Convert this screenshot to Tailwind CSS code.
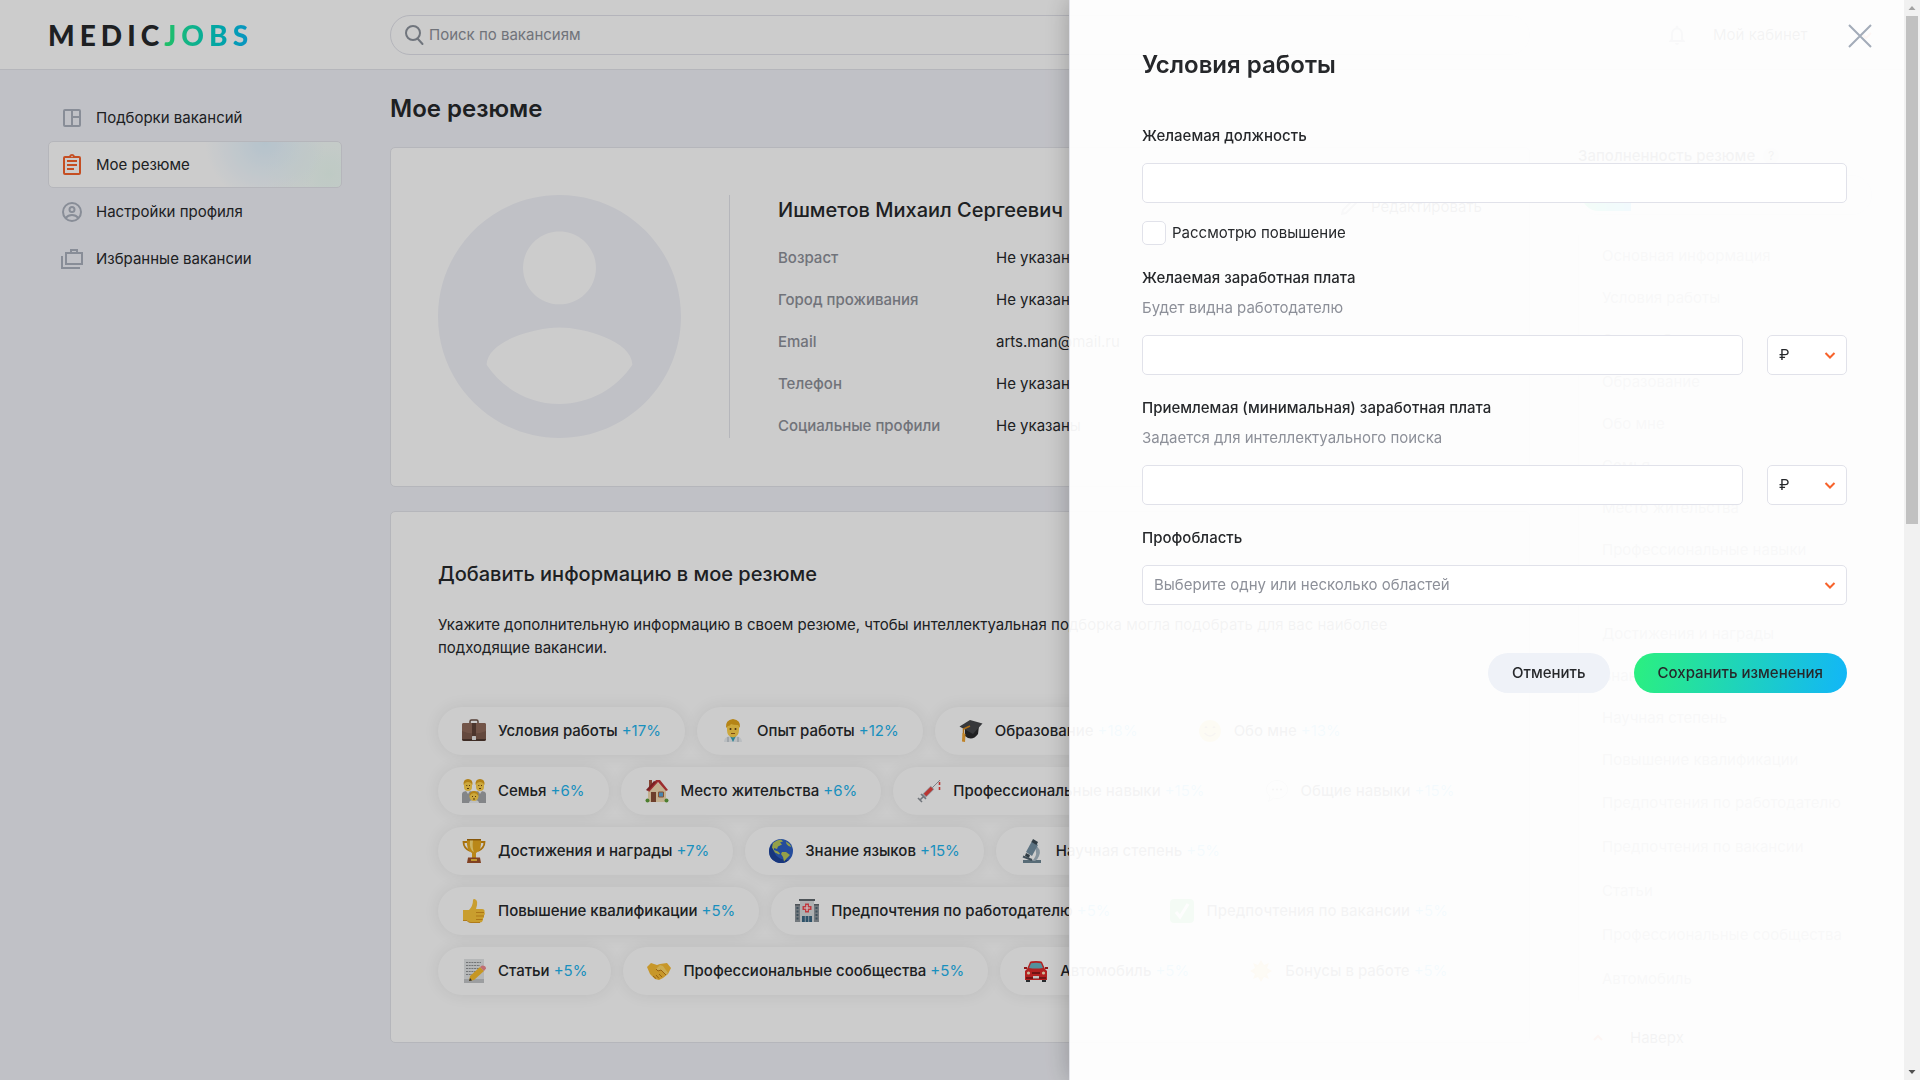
<!DOCTYPE html>
<html lang="ru">
<head>
<meta charset="utf-8">
<meta name="viewport" content="width=device-width, initial-scale=1">
<title>Мое резюме — MedicJobs</title>
<script src="https://cdn.jsdelivr.net/npm/@tailwindcss/browser@4"></script>
</head>
<body class="h-screen overflow-hidden bg-[#f1f2f8] font-['Inter',sans-serif] text-[15px] leading-6 text-[#26282b]">

<header class="grid h-[70px] grid-cols-[294px_1fr_294px] items-center gap-12 border-b border-[#e3e4ea] bg-white px-12">
  <a href="#" class="flex font-['Lato',sans-serif] text-[28px] leading-8 font-black tracking-[0.18em]" aria-label="MedicJobs"><span>MEDIC</span><span class="bg-gradient-to-r from-[#2bf07f] to-[#12b6f8] bg-clip-text text-transparent">JOBS</span></a>
  <label class="flex h-10 items-center gap-0.5 rounded-full border border-[#e1e2ea] px-3">
    <svg class="size-6 shrink-0 text-[#8d939d]" viewBox="0 0 24 24" fill="none" stroke="currentColor" stroke-width="2" stroke-linecap="round"><circle cx="10" cy="10" r="7"/><path d="M14.500 15.500 19.500 21"/></svg>
    <input type="search" placeholder="Поиск по вакансиям" class="w-full bg-transparent outline-none placeholder:text-[#8d9099]">
  </label>
  <div class="flex items-center gap-6 pl-[87px]">
    <svg class="size-6 text-[#8d939d]" viewBox="0 0 24 24" fill="currentColor"><path d="M12 22c1.100 0 2-.9 2-2h-4c0 1.100.9 2 2 2zm6-6v-5c0-3.070-1.630-5.640-4.500-6.320V4a1.500 1.500 0 0 0-3 0v.68C7.640 5.360 6 7.920 6 11v5l-2 2v1h16v-1l-2-2zm-2 1H8v-6c0-2.480 1.510-4.500 4-4.500s4 2.020 4 4.500v6z"/></svg>
    <a href="#" class="grow whitespace-nowrap">Мой кабинет</a>
    <svg class="size-3 text-[#f7622b]" viewBox="0 0 12 12" fill="none" stroke="currentColor" stroke-width="2"><path d="m1 4 5 5 5-5"/></svg>
  </div>
</header>

<div class="grid grid-cols-[294px_1fr_294px] items-start gap-12 px-12">
  <nav class="mt-6 flex flex-col">
    <a href="#" class="flex h-[47px] items-center gap-3 px-3">
      <svg class="size-6 text-[#aab1bd]" viewBox="0 0 24 24" fill="none" stroke="currentColor" stroke-width="2"><rect x="4" y="4" width="16" height="16" rx="1"/><path d="M12 4v16M12 11h8"/></svg>
      Подборки вакансий</a>
    <a href="#" class="flex h-[47px] items-center gap-3 rounded-[5px] border border-[#e3e4ea] bg-white bg-[radial-gradient(circle_at_74%_0%,#e2f4ff_0,#e2f4ff00_60px),radial-gradient(circle_at_96%_70%,#eefdf6_0,#eefdf600_64px)] px-[11px]">
      <svg class="size-6 text-[#f7622b]" viewBox="0 0 24 24" fill="currentColor"><path d="M7 15h7v2H7zm0-4h10v2H7zm0-4h10v2H7zm12-4h-4.180C14.400 1.840 13.300 1 12 1s-2.400.84-2.820 2H5a2 2 0 0 0-2 2v15a2 2 0 0 0 2 2h14a2 2 0 0 0 2-2V5a2 2 0 0 0-2-2zm-7-.25a.75.75 0 1 1 0 1.500.75.75 0 0 1 0-1.500zM19 20H5V5h14z"/></svg>
      Мое резюме</a>
    <a href="#" class="flex h-[47px] items-center gap-3 px-3">
      <svg class="size-6 text-[#aab1bd]" viewBox="0 0 24 24" fill="none" stroke="currentColor" stroke-width="2"><circle cx="12" cy="12" r="9"/><circle cx="12" cy="9.500" r="2.500"/><path d="M5.500 18c2-2.300 4-3 6.500-3s4.500.7 6.500 3"/></svg>
      Настройки профиля</a>
    <a href="#" class="flex h-[47px] items-center gap-3 px-3">
      <svg class="size-6 text-[#aab1bd]" viewBox="0 0 24 24" fill="none" stroke="currentColor" stroke-width="2"><path d="M6 6h16v11H6zM11 6V3h6v3M2 9v12h18"/></svg>
      Избранные вакансии</a>
  </nav>

  <main class="min-w-0">
    <h1 class="mt-6 text-2xl leading-[30px] font-semibold">Мое резюме</h1>

    <section class="mt-[23px] flex rounded-[5px] border border-[#e3e4ea] bg-white px-[47px] pt-[47px] pb-12">
      <svg class="size-[243px] shrink-0 text-[#f1f2f8]" viewBox="2 2 20 20" fill="currentColor"><path d="M12 2C6.480 2 2 6.480 2 12s4.480 10 10 10 10-4.480 10-10S17.520 2 12 2zm0 3c1.660 0 3 1.340 3 3s-1.340 3-3 3-3-1.340-3-3 1.340-3 3-3zm0 14.200c-2.500 0-4.710-1.280-6-3.220.03-1.990 4-3.080 6-3.080 1.990 0 5.970 1.090 6 3.080-1.290 1.940-3.500 3.220-6 3.220z"/></svg>
      <div class="ml-12 grow border-l border-[#e3e4ea] pl-12">
        <div class="flex items-start justify-between">
          <h2 class="text-xl leading-[30px] font-medium">Ишметов Михаил Сергеевич</h2>
          <button class="flex items-center gap-3"><svg class="size-5 text-[#8d939d]" viewBox="0 0 20 20" fill="none" stroke="currentColor" stroke-width="2"><path d="m3 17 1-4L14 3l3 3L7 16z"/></svg>Редактировать</button>
        </div>
        <dl class="mt-[21px] grid grid-cols-[218px_1fr] gap-y-[18px]">
          <dt class="font-medium text-[#8d9099]">Возраст</dt><dd>Не указан</dd>
          <dt class="font-medium text-[#8d9099]">Город проживания</dt><dd>Не указан</dd>
          <dt class="font-medium text-[#8d9099]">Email</dt><dd>arts.man@mail.ru</dd>
          <dt class="font-medium text-[#8d9099]">Телефон</dt><dd>Не указан</dd>
          <dt class="font-medium text-[#8d9099]">Социальные профили</dt><dd>Не указаны</dd>
        </dl>
      </div>
    </section>

    <section class="mt-6 rounded-[5px] border border-[#e3e4ea] bg-white p-[47px]">
      <h2 class="text-xl leading-[30px] font-medium">Добавить информацию в мое резюме</h2>
      <p class="mt-6 leading-[23px]">Укажите дополнительную информацию в своем резюме, чтобы интеллектуальная подборка могла подобрать для вас наиболее подходящие вакансии.</p>
      <div class="mt-12 flex flex-wrap gap-3 font-medium [&_span_span]:font-normal">
        <button class="flex h-12 items-center gap-3 rounded-full bg-white px-6 shadow-[0_0_16px_#00000014]">
          <svg class="size-6" viewBox="0 0 24 24"><path d="M8 5V2.500q0-1.500 1.500-1.500h5Q16 1 16 2.500V5" fill="none" stroke="#6b4f44" stroke-width="1.500"/><rect y="4" width="24" height="18" rx="2" fill="#7d5c4e"/><path d="M0 6q0-2 2-2h20q2 0 2 2v6q-12 5-24 0z" fill="#8f6a5a"/><path d="M0 20h24q0 2-2 2H2q-2 0-2-2z" fill="#4e372f"/><path d="M10 4h4v13h-4z" fill="#5f4339"/><rect x="10" y="17" width="4" height="4" rx=".5" fill="#e9e9e9"/></svg>
          <span>Условия работы <span class="text-[#1eb4ee]">+17%</span></span></button>
        <button class="flex h-12 items-center gap-3 rounded-full bg-white px-6 shadow-[0_0_16px_#00000014]">
          <svg class="size-6" viewBox="0 0 24 24"><path d="M3 23q0-5 6-6h6q6 1 6 6z" fill="#e9eef2"/><path d="m9 17 3 6 3-6z" fill="#35a3b8"/><path d="M7 18v5M17 18v5" stroke="#a9b2ba"/><path d="M6 8q0-7 6-7t6 7v3q0 7-6 7.500Q6 18 6 11z" fill="#ffd24b"/><path d="M5 9q-1-8 7-9 8 1 7 9l-2-3q-5 0-7-1-1 2-3 2z" fill="#e3a51c"/><circle cx="9.500" cy="10" r="1" fill="#5a3b14"/><circle cx="14.500" cy="10" r="1" fill="#5a3b14"/><path d="M10 14.500h4" stroke="#9c5f19"/></svg>
          <span>Опыт работы <span class="text-[#1eb4ee]">+12%</span></span></button>
        <button class="flex h-12 items-center gap-3 rounded-full bg-white px-6 shadow-[0_0_16px_#00000014]">
          <svg class="size-6" viewBox="0 0 24 24"><path d="m6 10 0 7q7 6 13-2l1-8z" fill="#28292b"/><path d="M.5 7.500 11 1l12.500 3.500L14 15z" fill="#45474a"/><path d="M11 7 4.500 10v7" fill="none" stroke="#d98b1d" stroke-width="1.500"/><path d="m3.500 14 3 1-.5 8-3-.5z" fill="#f0a431"/></svg>
          <span>Образование <span class="text-[#1eb4ee]">+18%</span></span></button>
        <button class="flex h-12 items-center gap-3 rounded-full bg-white px-6 shadow-[0_0_16px_#00000014]">
          <svg class="size-6" viewBox="0 0 24 24"><circle cx="12" cy="12" r="11" fill="#ffcf3f"/><path d="M7 9q1-2 2 0M15 9q1-2 2 0M6.500 14q5.500 6 11 0" fill="none" stroke="#7a4a12" stroke-width="1.500"/></svg>
          <span>Обо мне <span class="text-[#1eb4ee]">+13%</span></span></button>
        <button class="flex h-12 items-center gap-3 rounded-full bg-white px-6 shadow-[0_0_16px_#00000014]">
          <svg class="size-6" viewBox="0 0 24 24"><path d="M0 24v-9q0-3 6-3t6 3q0-3 6-3t6 3v9z" fill="#a4a7ab"/><path d="m4 12 2 3 2-3zM16 12l2 3 2-3z" fill="#f3f5f6"/><rect x="2" y="1" width="8" height="11" rx="4" fill="#ffd24b"/><rect x="14" y="1" width="8" height="11" rx="4" fill="#ffd24b"/><path d="M1.500 6Q1 0 6 0t4.500 6Q9 3 6 3T1.500 6zM13.500 6Q13 0 18 0t4.500 6Q21 3 18 3t-4.500 3z" fill="#dfa21c"/><path d="M4.300 6.500h1M7 6.500h1M16.300 6.500h1M19 6.500h1M5 9.500h2M17 9.500h2" stroke="#6d4514"/><path d="M7 24q0-3 5-3t5 3z" fill="#eef1f4"/><circle cx="12" cy="17.500" r="4.500" fill="#ffd24b"/><path d="M7.500 17q0-5 4.500-5t4.500 5q-2-3-4.500-3T7.500 17z" fill="#e3a51c"/><path d="M10 17.500h1M13 17.500h1M11 20h2" stroke="#6d4514"/></svg>
          <span>Семья <span class="text-[#1eb4ee]">+6%</span></span></button>
        <button class="flex h-12 items-center gap-3 rounded-full bg-white px-6 shadow-[0_0_16px_#00000014]">
          <svg class="size-6" viewBox="0 0 24 24"><path d="M4 1h3v7H4z" fill="#a5563e"/><path d="M3 11 12 3l9 8v12H3z" fill="#f3dcb4"/><path d="M3 11 11 1h4l8 10-2 1-8-9-9 10z" fill="#c4393a"/><path d="m1 11 8-9 2 1-8 9z" fill="#96292b"/><path d="M6 13h5v10H6z" fill="#8a4f38"/><path d="M13.500 13h5v5h-5z" fill="#5ba6dc" stroke="#a8673f"/><circle cx="2.500" cy="21.500" r="2" fill="#5f9e3b"/><circle cx="21.500" cy="21.500" r="2" fill="#5f9e3b"/></svg>
          <span>Место жительства <span class="text-[#1eb4ee]">+6%</span></span></button>
        <button class="flex h-12 items-center gap-3 rounded-full bg-white px-6 shadow-[0_0_16px_#00000014]">
          <svg class="size-6" viewBox="0 0 24 24"><path d="m15 9 8-8" stroke="#9aa0a7"/><path d="m6.500 17.500 9-9" stroke="#b9bfc6" stroke-width="5"/><path d="m8 16 7-7" stroke="#e8443f" stroke-width="3.600"/><path d="m3 21 4-4M1 19l4 4M4 15l5 5" stroke="#8d939a" stroke-width="1.600"/><path d="M22.500 3v3M22.500 8v3" stroke="#e8443f" stroke-width="1.600"/></svg>
          <span>Профессиональные навыки <span class="text-[#1eb4ee]">+15%</span></span></button>
        <button class="flex h-12 items-center gap-3 rounded-full bg-white px-6 shadow-[0_0_16px_#00000014]">
          <svg class="size-6" viewBox="0 0 24 24"><path d="M12 1.500c6 0 10.500 4 10.500 9s-4.500 9-10.500 9q-2 0-3.500-.5Q6 22 3 22.500q2-2 2-5Q1.500 15 1.500 10.500c0-5 4.500-9 10.500-9z" fill="#fff" stroke="#b5b8bc"/><circle cx="8" cy="10.500" r="1" fill="#555"/><circle cx="12" cy="10.500" r="1" fill="#555"/><circle cx="16" cy="10.500" r="1" fill="#555"/></svg>
          <span>Общие навыки <span class="text-[#1eb4ee]">+15%</span></span></button>
        <button class="flex h-12 items-center gap-3 rounded-full bg-white px-6 shadow-[0_0_16px_#00000014]">
          <svg class="size-6" viewBox="0 0 24 24"><path d="M6 3H1.500q0 6 6.500 9M18 3h4.500q0 6-6.500 9" fill="none" stroke="#d18e12" stroke-width="1.800"/><path d="M5 0h14q1 12-5 14v5h-4v-5Q4 12 5 0z" fill="#e8a91e"/><path d="M8 1h3q-1 8 1 12-5-2-4-12z" fill="#ffe07a"/><path d="M5 .7h14" stroke="#a86c0c" stroke-width="1.500"/><path d="M6 18.500h12l1 5.500H5z" fill="#a2522b"/><path d="M9 20h6v2H9z" fill="#f0bd3c"/></svg>
          <span>Достижения и награды <span class="text-[#1eb4ee]">+7%</span></span></button>
        <button class="flex h-12 items-center gap-3 rounded-full bg-white px-6 shadow-[0_0_16px_#00000014]">
          <svg class="size-6" viewBox="0 0 24 24"><circle cx="12" cy="12" r="12" fill="#2d5fc4"/><path d="M0 12A12 12 0 0 0 20 21Q5 22 3 5 0 8 0 12z" fill="#1f449c"/><path d="M4 4q4-3.500 8-3.500l2 2-3 1 2 2-4 2-1 2.500-3-1 0 2 4 1.500 2 2-1 1-4-2-3-5zM13 13l4 0 4 3-3 3-3 3.500-1-4.500-2-3zM17 2.500q4 2 5.500 5.500l-3-1-2-2z" fill="#b9c85a"/></svg>
          <span>Знание языков <span class="text-[#1eb4ee]">+15%</span></span></button>
        <button class="flex h-12 items-center gap-3 rounded-full bg-white px-6 shadow-[0_0_16px_#00000014]">
          <svg class="size-6" viewBox="0 0 24 24"><path d="M3 21h18v3H3z" fill="#6f8795"/><path d="M15 6q7 4 4 11-1 3-4 5h-3q5-5 4-9z" fill="#a9bac5"/><path d="m12 2 6 4-6 11-6-4z" fill="#7590a3"/><path d="m13 0 5 3-1.500 3-5-3z" fill="#3d4c56"/><path d="m6 14 4 2-1 3-4-2z" fill="#3d4c56"/><path d="M3 17.500 12 21" stroke="#50616d" stroke-width="2"/></svg>
          <span>Научная степень <span class="text-[#1eb4ee]">+5%</span></span></button>
        <button class="flex h-12 items-center gap-3 rounded-full bg-white px-6 shadow-[0_0_16px_#00000014]">
          <svg class="size-6" viewBox="0 0 24 24"><path d="M1 11h6q4-4 4-10 0-1 1.500-1Q17 1 14 10h6q3 0 2.500 3 1 2-.5 3.500.5 2-1 3 0 4-3 4H9q-3 0-4-2H1z" fill="#fcc63a"/><path d="M14 13.500h8M14 17h8M14 20.500h6.500" stroke="#d9941d"/><path d="M1 21.500h4q1 2 4 2h9" fill="none" stroke="#dc9a20"/></svg>
          <span>Повышение квалификации <span class="text-[#1eb4ee]">+5%</span></span></button>
        <button class="flex h-12 items-center gap-3 rounded-full bg-white px-6 shadow-[0_0_16px_#00000014]">
          <svg class="size-6" viewBox="0 0 24 24"><path d="M0 6h24v17H0z" fill="#8f979d"/><path d="M5 1h14v22H5z" fill="#d9dcde"/><path d="M4 0h16v2H4zM0 5h5v1.500H0zM19 5h5v1.500h-5z" fill="#62696f"/><path d="M12 4.500v9M7.500 9h9" stroke="#ef4a50" stroke-width="4"/><path d="M12 6v6M9 9h6" stroke="#fff" stroke-width="1.200"/><path d="M2.500 8v13M21.500 8v13" stroke="#4e6474" stroke-width="2" stroke-dasharray="2 1.500"/><path d="M7 17h10v6H7z" fill="#3a6784"/><path d="M10.300 17v6M13.700 17v6" stroke="#a9bac5"/></svg>
          <span>Предпочтения по работодателю <span class="text-[#1eb4ee]">+5%</span></span></button>
        <button class="flex h-12 items-center gap-3 rounded-full bg-white px-6 shadow-[0_0_16px_#00000014]">
          <svg class="size-6" viewBox="0 0 24 24"><rect width="24" height="24" rx="4" fill="#3ecf4c"/><path d="m6 13 4 5 8-13" fill="none" stroke="#fff" stroke-width="3"/></svg>
          <span>Предпочтения по вакансии <span class="text-[#1eb4ee]">+5%</span></span></button>
        <button class="flex h-12 items-center gap-3 rounded-full bg-white px-6 shadow-[0_0_16px_#00000014]">
          <svg class="size-6" viewBox="0 0 24 24"><path d="M2 0h20v24H2z" fill="#e3e5e6"/><path d="M4 3.500h15M4 6.500h14M4 9.500h15M4 12.500h11M4 15.500h8" stroke="#8f9294" stroke-dasharray="2 .7"/><path d="M2 20h20v4H2z" fill="#c3c6c8"/><path d="m8 17 10-9 4 4-10 9-5 1z" fill="#f8bd2d"/><path d="m18 8 2-1.500q4 0 4 3L22 12z" fill="#f08a90"/><path d="m7 22 1-3 2 2.500z" fill="#3c3d40"/></svg>
          <span>Статьи <span class="text-[#1eb4ee]">+5%</span></span></button>
        <button class="flex h-12 items-center gap-3 rounded-full bg-white px-6 shadow-[0_0_16px_#00000014]">
          <svg class="size-6" viewBox="0 0 24 24"><path d="m0 8 4-4 6 2 3-1 7-1 4 5-3 6-5 4-4 2-4-1-5-5z" fill="#f9bd35"/><path d="m9 10 4-4 3 1 5 7-2 2-5-5-3 1z" fill="#ffd766"/><path d="m9 10 2 2 3-1 5 5M12 15l3 3M9 16l3 3.500M6 17l3 2.500" fill="none" stroke="#bf7a16"/></svg>
          <span>Профессиональные сообщества <span class="text-[#1eb4ee]">+5%</span></span></button>
        <button class="flex h-12 items-center gap-3 rounded-full bg-white px-6 shadow-[0_0_16px_#00000014]">
          <svg class="size-6" viewBox="0 0 24 24"><path d="M2 20h4v3H2zM18 20h4v3h-4z" fill="#33363a"/><path d="M3 10 6 3q1-1 6-1t6 1l3 7 2 2v9H1v-9z" fill="#e02a2a"/><path d="M5 9 7 4.200q5-1 10 0L19 9q-7 1-14 0z" fill="#69b6c4"/><path d="M0 8h3v2H0zM21 8h3v2h-3z" fill="#b51d1d"/><path d="M8 13h8v2H8zM2 18h20v2H2z" fill="#8f1a1a"/><circle cx="4.500" cy="14" r="1.600" fill="#ffe9c2"/><circle cx="19.500" cy="14" r="1.600" fill="#ffe9c2"/><path d="M9 17h6v2.500H9z" fill="#f4f4f4"/></svg>
          <span>Автомобиль <span class="text-[#1eb4ee]">+5%</span></span></button>
        <button class="flex h-12 items-center gap-3 rounded-full bg-white px-6 shadow-[0_0_16px_#00000014]">
          <svg class="size-6" viewBox="0 0 24 24"><path d="m12 1 3 5 5-2-2 5 5 3-5 3 2 5-5-2-3 5-3-5-5 2 2-5-5-3 5-3-2-5 5 2z" fill="#ffb52e"/><circle cx="12" cy="12" r="6" fill="#ffd34f"/></svg>
          <span>Бонусы в работе <span class="text-[#1eb4ee]">+5%</span></span></button>
      </div>
    </section>
  </main>

  <aside class="mt-[74px]">
    <h2 class="flex items-center gap-2 font-medium">Заполненность резюме <span class="flex size-4 items-center justify-center rounded-full bg-[#e1e2ea] text-xs">?</span></h2>
    <div class="mt-[7px] h-10 overflow-hidden rounded-full border border-[#e3e4ea] bg-white p-[3px]">
      <div class="h-full w-[17%] rounded-l-full bg-gradient-to-r from-[#2bf07f] to-[#12b6f8]"></div>
    </div>
    <ul class="mt-5 border-l border-[#e3e4ea] pl-[23px] text-[#83868f]">
      <li class="h-[42px] leading-[42px]">Основная информация</li>
      <li class="h-[42px] leading-[42px]">Условия работы</li>
      <li class="h-[42px] leading-[42px]">Опыт работы</li>
      <li class="h-[42px] leading-[42px]">Образование</li>
      <li class="h-[42px] leading-[42px]">Обо мне</li>
      <li class="h-[42px] leading-[42px]">Семья</li>
      <li class="h-[42px] leading-[42px]">Место жительства</li>
      <li class="h-[42px] leading-[42px]">Профессиональные навыки</li>
      <li class="h-[42px] leading-[42px]">Общие навыки</li>
      <li class="h-[42px] leading-[42px]">Достижения и награды</li>
      <li class="h-[42px] leading-[42px]">Знание языков</li>
      <li class="h-[42px] leading-[42px]">Научная степень</li>
      <li class="h-[42px] leading-[42px]">Повышение квалификации</li>
      <li class="h-11 leading-[44px]">Предпочтения по работодателю</li>
      <li class="h-11 leading-[44px]">Предпочтения по вакансии</li>
      <li class="h-11 leading-[44px]">Статьи</li>
      <li class="h-11 leading-[44px]">Профессиональные сообщества</li>
      <li class="h-11 leading-[44px]">Автомобиль</li>
    </ul>
    <a href="#" class="mt-[25px] flex items-center gap-6 pl-[14px]"><svg class="size-3 text-[#f7622b]" viewBox="0 0 12 12" fill="none" stroke="currentColor" stroke-width="2"><path d="m2 8 4-4 4 4"/></svg><span class="pl-0.5">Наверх</span></a>
  </aside>
</div>

<!-- Modal layer: dimmer, slide-over panel and scroll track -->
<div class="fixed inset-0 flex justify-end bg-black/20">
  <div role="dialog" aria-labelledby="dlg-title" class="w-[835px] max-w-full border-l border-[#e3e4ea] bg-white/95 pt-[49px] pr-[57px] pl-[72px] shadow-[0_0_24px_#00000040]">
    <button aria-label="Закрыть" class="absolute top-6 right-12 text-[#a3acb9]"><svg class="size-6" viewBox="0 0 24 24" fill="none" stroke="currentColor" stroke-width="2"><path d="m1 1 22 22M23 1 1 23"/></svg></button>
    <form>
      <h2 id="dlg-title" class="text-2xl leading-8 font-semibold">Условия работы</h2>

      <label for="position" class="mt-[43px] block font-medium">Желаемая должность</label>
      <input id="position" type="text" class="mt-[15px] block h-10 w-full rounded-[5px] border border-[#e1e2ea] bg-white px-3 outline-none">
      <div class="mt-[18px] flex items-center gap-1.5">
        <input id="raise" type="checkbox" class="size-6 appearance-none rounded-[5px] border border-[#e1e2ea] bg-white">
        <label for="raise">Рассмотрю повышение</label>
      </div>

      <label for="salary" class="mt-[21px] block font-medium">Желаемая заработная плата</label>
      <p class="mt-1.5 text-[#8d9099]">Будет видна работодателю</p>
      <div class="mt-[15px] flex gap-6">
        <input id="salary" type="text" class="h-10 min-w-0 grow rounded-[5px] border border-[#e1e2ea] bg-white px-3 outline-none">
        <div class="relative w-20">
          <select aria-label="Валюта" class="h-10 w-full appearance-none rounded-[5px] border border-[#e1e2ea] bg-white px-[11px]"><option>₽</option></select>
          <svg class="pointer-events-none absolute top-[14px] right-[11px] size-3 text-[#f7622b]" viewBox="0 0 12 12" fill="none" stroke="currentColor" stroke-width="2"><path d="m1.500 4 4.500 4.500L10.500 4"/></svg>
        </div>
      </div>

      <label for="min-salary" class="mt-[21px] block font-medium">Приемлемая (минимальная) заработная плата</label>
      <p class="mt-1.5 text-[#8d9099]">Задается для интеллектуального поиска</p>
      <div class="mt-[15px] flex gap-6">
        <input id="min-salary" type="text" class="h-10 min-w-0 grow rounded-[5px] border border-[#e1e2ea] bg-white px-3 outline-none">
        <div class="relative w-20">
          <select aria-label="Валюта" class="h-10 w-full appearance-none rounded-[5px] border border-[#e1e2ea] bg-white px-[11px]"><option>₽</option></select>
          <svg class="pointer-events-none absolute top-[14px] right-[11px] size-3 text-[#f7622b]" viewBox="0 0 12 12" fill="none" stroke="currentColor" stroke-width="2"><path d="m1.500 4 4.500 4.500L10.500 4"/></svg>
        </div>
      </div>

      <label for="area" class="mt-[21px] block font-medium">Профобласть</label>
      <div class="relative mt-[15px]">
        <select id="area" class="h-10 w-full appearance-none rounded-[5px] border border-[#e1e2ea] bg-white px-[11px] text-[#8d9099]"><option>Выберите одну или несколько областей</option></select>
        <svg class="pointer-events-none absolute top-[14px] right-[11px] size-3 text-[#f7622b]" viewBox="0 0 12 12" fill="none" stroke="currentColor" stroke-width="2"><path d="m1.500 4 4.500 4.500L10.500 4"/></svg>
      </div>

      <div class="mt-12 flex justify-end gap-6 font-medium">
        <button type="button" class="h-10 rounded-full bg-[#eff2f8] px-6">Отменить</button>
        <button type="submit" class="h-10 rounded-full bg-[linear-gradient(100deg,#2bf07f,#12b6f8)] px-6">Сохранить изменения</button>
      </div>
    </form>
  </div>
  <div aria-hidden="true" class="flex w-4 flex-col items-center bg-[#f1f1f1]">
    <svg class="h-4 w-4" viewBox="0 0 16 16"><path d="M4.500 10 8 6l3.500 4z" fill="#a3a3a3"/></svg>
    <div class="h-[47%] w-3 bg-[#c1c1c1]"></div>
    <svg class="mt-auto h-4 w-4" viewBox="0 0 16 16"><path d="M4.500 6 8 10l3.500-4z" fill="#505050"/></svg>
  </div>
</div>
</body>
</html>
